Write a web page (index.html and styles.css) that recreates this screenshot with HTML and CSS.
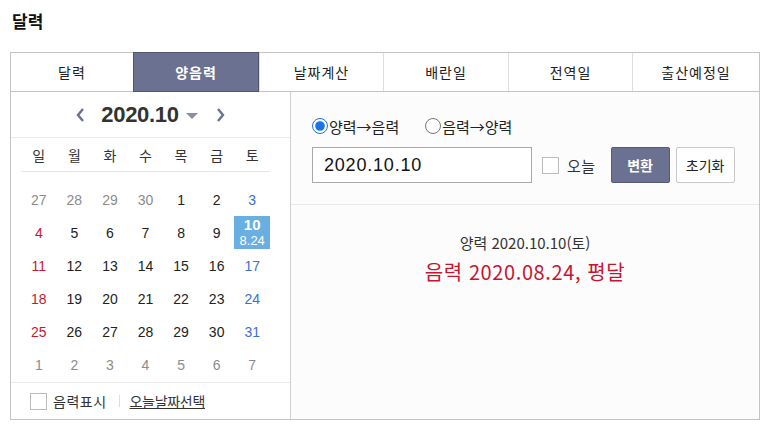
FILE: index.html
```html
<!DOCTYPE html>
<html lang="ko">
<head>
<meta charset="utf-8">
<link rel="stylesheet" href="styles.css">
</head>
<body>
<h1 class="title">달력</h1>
<div class="box">
  <ul class="tabs">
    <li class="tab">달력</li>
    <li class="tab active">양음력</li>
    <li class="tab">날짜계산</li>
    <li class="tab">배란일</li>
    <li class="tab">전역일</li>
    <li class="tab">출산예정일</li>
  </ul>
  <div class="content">
    <div class="cal">
      <div class="cal-head">
        <svg class="arrow" width="10" height="16" viewBox="0 0 10 16"><path d="M8 2 L3 8 L8 14" fill="none" stroke="#6b7190" stroke-width="2.4"/></svg>
        <span class="ym">2020.10</span>
        <svg class="caret" width="12" height="8" viewBox="0 0 12 8"><path d="M0 1 H12 L6 7 Z" fill="#8a8fa6"/></svg>
        <svg class="arrow next" width="10" height="16" viewBox="0 0 10 16"><path d="M2 2 L7 8 L2 14" fill="none" stroke="#6b7190" stroke-width="2.4"/></svg>
      </div>
      <div class="week">
        <span>일</span><span>월</span><span>화</span><span>수</span><span>목</span><span>금</span><span>토</span>
      </div>
      <div class="days">
        <span class="o">27</span><span class="o">28</span><span class="o">29</span><span class="o">30</span><span>1</span><span>2</span><span class="sat">3</span>
        <span class="sun">4</span><span>5</span><span>6</span><span>7</span><span>8</span><span>9</span><span class="sel"><b>10</b><i>8.24</i></span>
        <span class="sun">11</span><span>12</span><span>13</span><span>14</span><span>15</span><span>16</span><span class="sat">17</span>
        <span class="sun">18</span><span>19</span><span>20</span><span>21</span><span>22</span><span>23</span><span class="sat">24</span>
        <span class="sun">25</span><span>26</span><span>27</span><span>28</span><span>29</span><span>30</span><span class="sat">31</span>
        <span class="o">1</span><span class="o">2</span><span class="o">3</span><span class="o">4</span><span class="o">5</span><span class="o">6</span><span class="o">7</span>
      </div>
      <div class="cal-foot">
        <span class="chk"></span>
        <span class="lbl">음력표시</span>
        <span class="bar"></span>
        <a class="today">오늘날짜선택</a>
      </div>
    </div>
    <div class="conv">
      <div class="form">
        <div class="radios">
          <label class="radio"><input type="radio" name="m" checked>양력→음력</label>
          <label class="radio"><input type="radio" name="m">음력→양력</label>
        </div>
        <div class="row">
          <div class="input">2020.10.10</div>
          <span class="chk small"></span>
          <span class="lbl2">오늘</span>
          <button class="btn primary">변환</button>
          <button class="btn">초기화</button>
        </div>
      </div>
      <div class="result">
        <p class="solar">양력 2020.10.10(토)</p>
        <p class="lunar">음력 2020.08.24, 평달</p>
      </div>
    </div>
  </div>
</div>
</body>
</html>
```
FILE: styles.css
```css
* { box-sizing: border-box; }
body {
  margin: 0;
  background: #fff;
  font-family: "Noto Sans CJK KR", "Liberation Sans", sans-serif;
  color: #222;
}
.title {
  margin: 0;
  padding: 10px 0 0 12px;
  height: 52px;
  font-size: 17px;
  font-weight: 700;
  line-height: 22px;
  color: #111;
}
.box {
  margin-left: 10px;
  width: 750px;
}
.tabs {
  display: grid;
  grid-template-columns: 122px 126px 124px 125px 124px 127px;
  margin: 0;
  padding: 0;
  list-style: none;
  height: 40px;
  border: 1px solid #c4c4c4;
}
.tab {
  display: flex;
  align-items: center;
  justify-content: center;
  font-size: 14px;
  letter-spacing: 1px;
  color: #222;
  border-left: 1px solid #ddd;
}
.tab:first-child { border-left: none; }
.tab.active {
  background: #6b7190;
  color: #fff;
  font-weight: 700;
  margin: -1px 0;
  border: 1px solid #4f5571;
}
.content {
  display: flex;
  height: 328px;
  border: 1px solid #c4c4c4;
  border-top: none;
}
.cal {
  width: 280px;
  border-right: 1px solid #d0d0d0;
  display: flex;
  flex-direction: column;
}
.cal-head {
  height: 46px;
  border-bottom: 1px solid #eaeaea;
  display: flex;
  align-items: center;
  justify-content: center;
}
.arrow { margin-right: 16px; }
.arrow.next { margin: 0 0 0 18px; }
.ym {
  font-family: "Liberation Sans", sans-serif;
  font-weight: 700;
  font-size: 22px;
  color: #333;
  letter-spacing: -0.3px;
}
.caret { margin-left: 7px; margin-top: 2px; }
.week {
  margin: 0 20px 0 10px;
  height: 34px;
  display: grid;
  grid-template-columns: repeat(7, 1fr);
  align-items: center;
  border-bottom: 1px solid #e4e4e4;
  font-size: 14px;
  text-align: center;
  color: #333;
}
.days {
  margin: 11px 20px 0 10px;
  display: grid;
  grid-template-columns: repeat(7, 1fr);
  grid-auto-rows: 33px;
  font-family: "Liberation Sans", sans-serif;
  font-size: 14px;
  text-align: center;
  color: #222;
}
.days span {
  display: flex;
  align-items: center;
  justify-content: center;
}
.days .o { color: #8c8c8c; }
.days .sun { color: #c8182f; }
.days .sat { color: #3c6ed6; }
.days .sel {
  flex-direction: column;
  background: #6aafe2;
  color: #fff;
}
.sel b { display: block; font-size: 15px; line-height: 16px; font-weight: 700; }
.sel i { display: block; font-style: normal; font-size: 13px; line-height: 15px; }
.cal-foot {
  margin-top: auto;
  height: 37px;
  border-top: 1px solid #eaeaea;
  display: flex;
  align-items: center;
  padding-left: 19px;
  font-size: 14px;
}
.chk {
  width: 17px;
  height: 17px;
  border: 1px solid #bbb;
  background: #fff;
  flex: none;
}
.lbl { margin-left: 6px; color: #333; letter-spacing: 0.5px; }
.bar {
  width: 1px;
  height: 12px;
  background: #ddd;
  margin: 0 10px 0 12px;
}
.today {
  color: #333;
  text-decoration: underline;
  font-size: 14px;
  letter-spacing: -0.3px;
}
.conv {
  flex: 1;
  background: #fcfcfc;
  display: flex;
  flex-direction: column;
}
.form {
  height: 113px;
  border-bottom: 1px solid #e8e8e8;
  padding: 22px 0 0 21px;
}
.radios {
  display: flex;
  align-items: center;
  height: 24px;
  font-size: 15px;
  color: #222;
}
.radio { display: flex; align-items: center; margin-right: 26px; }
.radio input {
  margin: 0 1px 0 0;
  width: 16px;
  height: 16px;
  accent-color: #1a73e8;
}
.row {
  display: flex;
  align-items: center;
  margin-top: 9px;
  height: 36px;
}
.input {
  width: 220px;
  height: 36px;
  border: 1px solid #a9a9a9;
  background: #fff;
  font-family: "Liberation Sans", sans-serif;
  font-size: 18px;
  letter-spacing: 0.8px;
  line-height: 34px;
  padding-left: 11px;
  color: #111;
}
.chk.small { margin-left: 10px; }
.lbl2 { margin-left: 8px; font-size: 15px; color: #333; letter-spacing: 0.5px; }
.btn {
  height: 36px;
  width: 59px;
  border: 1px solid #c8c8c8;
  border-radius: 2px;
  background: #fff;
  font-family: "Noto Sans CJK KR", sans-serif;
  font-size: 14px;
  color: #222;
  padding: 0;
  margin-left: 6px;
}
.btn.primary {
  margin-left: 15px;
  background: #6b7190;
  border-color: #555b78;
  color: #fff;
  font-weight: 700;
}
.result {
  text-align: center;
  padding-top: 28px;
}
.solar {
  margin: 0;
  font-size: 15px;
  line-height: 20px;
  color: #333;
}
.lunar {
  margin: 6px 0 0;
  font-size: 20px;
  letter-spacing: 0.6px;
  line-height: 26px;
  color: #c8142f;
}
```
